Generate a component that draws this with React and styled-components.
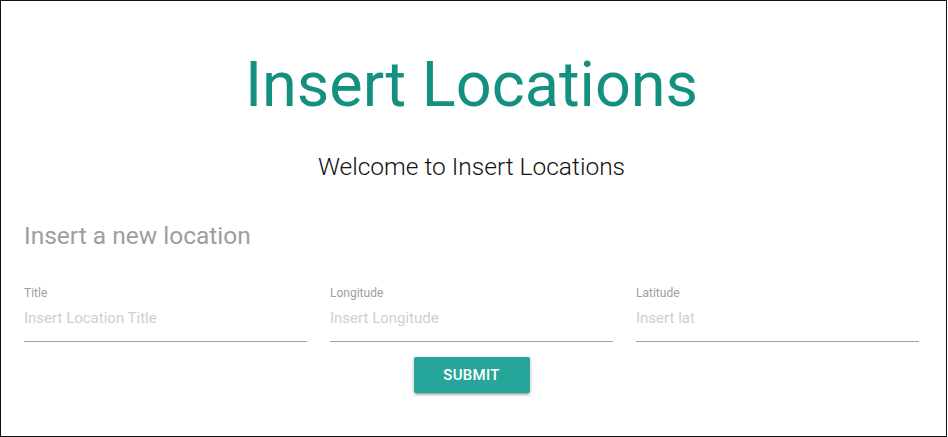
import React from "react";
import styled, { createGlobalStyle } from "styled-components";

const Global = createGlobalStyle`
  html, body { margin: 0; padding: 0; background: #fff; }
  body { font-family: Roboto, "Noto Sans", sans-serif; }
`;

const Frame = styled.div`
  box-sizing: border-box;
  width: 947px;
  height: 437px;
  border: 1px solid #111;
  display: flex;
  flex-direction: column;
  padding: 0 27px 0 23px;
`;

const Title = styled.h1`
  margin: 46px 0 0;
  text-align: center;
  font-size: 63px;
  line-height: 76px;
  font-weight: 400;
  color: #14907f;
`;

const Welcome = styled.p`
  margin: 29px 0 0;
  text-align: center;
  font-size: 24.5px;
  line-height: 30px;
  font-weight: 300;
  color: #111;
`;

const SectionTitle = styled.h2`
  margin: 39px 0 0;
  font-size: 24.5px;
  line-height: 30px;
  font-weight: 400;
  color: #9e9e9e;
`;

const Fields = styled.div`
  display: grid;
  grid-template-columns: repeat(3, 283px);
  column-gap: 23px;
  margin-top: 35px;
`;

const Field = styled.label`
  display: flex;
  flex-direction: column;
`;

const Label = styled.span`
  font-size: 12px;
  line-height: 14px;
  color: #9e9e9e;
`;

const Input = styled.input`
  margin-top: 8px;
  border: none;
  border-bottom: 1px solid #9e9e9e;
  padding: 0 0 13px;
  font-family: Roboto, sans-serif;
  font-size: 15px;
  line-height: 20px;
  outline: none;
  background: transparent;
  &::placeholder { color: #cfcfcf; }
`;

const Actions = styled.div`
  display: flex;
  justify-content: center;
  margin-top: 15px;
`;

const Button = styled.button`
  width: 116px;
  height: 36px;
  border: none;
  border-radius: 2px;
  background: #26a69a;
  color: #fff;
  font-family: Roboto, sans-serif;
  font-size: 15px;
  font-weight: 500;
  letter-spacing: 0.3px;
  box-shadow: 0 2px 2px 0 rgba(0,0,0,0.14), 0 3px 1px -2px rgba(0,0,0,0.12), 0 1px 5px 0 rgba(0,0,0,0.2);
  cursor: pointer;
`;

export default function App() {
  return (
    <>
      <Global />
      <Frame>
        <Title>Insert Locations</Title>
        <Welcome>Welcome to Insert Locations</Welcome>
        <SectionTitle>Insert a new location</SectionTitle>
        <Fields>
          <Field>
            <Label>Title</Label>
            <Input placeholder="Insert Location Title" />
          </Field>
          <Field>
            <Label>Longitude</Label>
            <Input placeholder="Insert Longitude" />
          </Field>
          <Field>
            <Label>Latitude</Label>
            <Input placeholder="Insert lat" />
          </Field>
        </Fields>
        <Actions>
          <Button>SUBMIT</Button>
        </Actions>
      </Frame>
    </>
  );
}
